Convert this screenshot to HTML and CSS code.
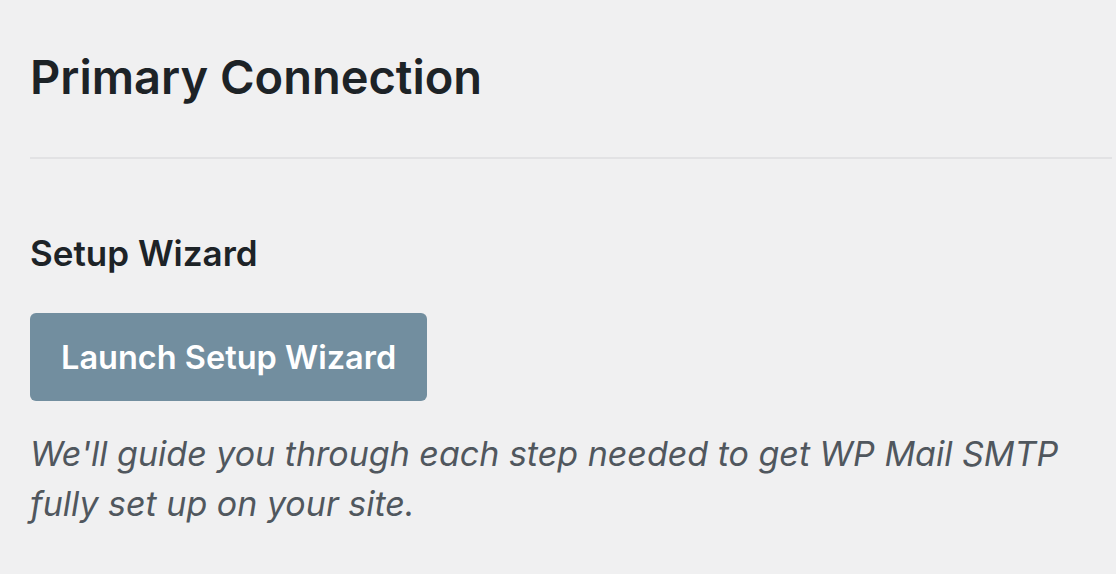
FILE: index.html
```html
<!DOCTYPE html>
<html lang="en">

<head>
    <meta charset="UTF-8">
    <meta name="viewport" content="width=device-width, initial-scale=1.0">
    <title>Primary Connection</title>
    <link rel="stylesheet" href="styles.css">
</head>

<body>
    <div class="wrap">
        <h2 class="section-title">Primary Connection</h2>
        <hr class="divider">
        <div class="setting">
            <h3 class="setting-label">Setup Wizard</h3>
            <button class="btn-wizard" type="button">Launch Setup Wizard</button>
            <p class="desc">We'll guide you through each step needed to get WP Mail SMTP fully set up on your site.</p>
        </div>
    </div>
</body>

</html>
```

FILE: styles.css
```css
body {
    font-family: Inter, 'Noto Sans', sans-serif;
    margin: 0;
    padding: 0;
    background-color: #f0f0f1;
    color: #1d2327;
}

.wrap {
    padding: 0 4px 0 30px;
}

.section-title {
    margin: 0;
    padding-top: 50px;
    font-size: 47px;
    font-weight: 600;
    line-height: 54px;
}

.divider {
    border: 0;
    height: 2px;
    background-color: #e2e2e4;
    margin: 53px 0 0 0;
}

.setting {
    padding-top: 74px;
}

.setting-label {
    margin: 0;
    font-size: 35px;
    font-weight: 600;
    line-height: 40px;
}

.btn-wizard {
    display: block;
    margin-top: 40px;
    height: 88px;
    padding: 0 31px;
    border: 0;
    border-radius: 6px;
    background-color: #728e9f;
    color: #fff;
    font-family: inherit;
    font-size: 32.5px;
    font-weight: 600;
}

.desc {
    margin: 28px 0 0 0;
    font-size: 34px;
    line-height: 50px;
    font-style: italic;
    color: #50575e;
    max-width: 1070px;
}
```
